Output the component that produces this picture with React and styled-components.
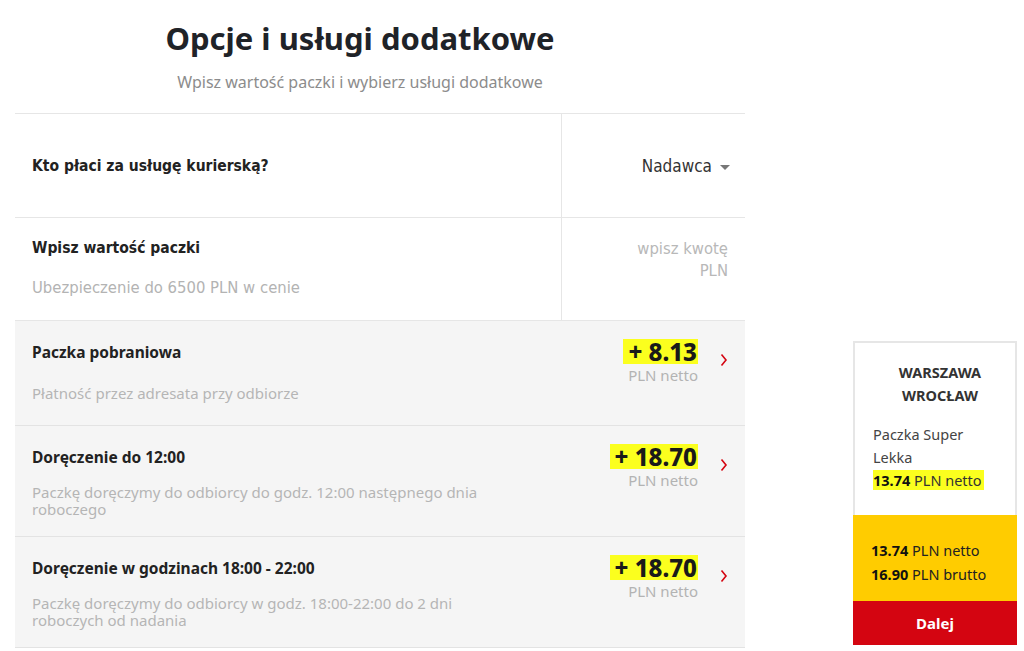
import React from 'react';
import styled, { createGlobalStyle } from 'styled-components';

const GlobalStyle = createGlobalStyle`
  body {
    margin: 0;
    background: #fff;
    font-family: 'Noto Sans', 'Open Sans', sans-serif;
    color: #222;
  }
`;

const services = [
  {
    title: 'Paczka pobraniowa',
    desc: 'Płatność przez adresata przy odbiorze',
    price: '+ 8.13',
  },
  {
    title: 'Doręczenie do 12:00',
    desc: 'Paczkę doręczymy do odbiorcy do godz. 12:00 następnego dnia roboczego',
    price: '+ 18.70',
  },
  {
    title: 'Doręczenie w godzinach 18:00 - 22:00',
    desc: 'Paczkę doręczymy do odbiorcy w godz. 18:00-22:00 do 2 dni roboczych od nadania',
    price: '+ 18.70',
  },
];

const App = () => {
  return (
    <>
      <GlobalStyle />
      <Page>
        <Main>
          <Header>
            <Title>Opcje i usługi dodatkowe</Title>
            <Subtitle>Wpisz wartość paczki i wybierz usługi dodatkowe</Subtitle>
          </Header>
          <List>
            <SplitRow $h={104}>
              <LeftCell>
                <NarrowTitle>Kto płaci za usługę kurierską?</NarrowTitle>
              </LeftCell>
              <RightCell>
                <Select>
                  Nadawca
                  <Caret />
                </Select>
              </RightCell>
            </SplitRow>
            <SplitRow $h={103}>
              <LeftCell $top>
                <NarrowTitle>Wpisz wartość paczki</NarrowTitle>
                <NarrowDesc>Ubezpieczenie do 6500 PLN w cenie</NarrowDesc>
              </LeftCell>
              <RightCell $top>
                <Placeholder>
                  wpisz kwotę
                  <br />
                  PLN
                </Placeholder>
              </RightCell>
            </SplitRow>
            {services.map((s) => (
              <ServiceRow key={s.title}>
                <ServiceText>
                  <ServiceTitle>{s.title}</ServiceTitle>
                  <ServiceDesc>{s.desc}</ServiceDesc>
                </ServiceText>
                <PriceBox>
                  <Price>{s.price}</Price>
                  <PriceUnit>PLN netto</PriceUnit>
                </PriceBox>
                <Chevron viewBox="0 0 8 14">
                  <path d="M1.5 1.5 L6 7 L1.5 12.5" fill="none" stroke="#d40511" strokeWidth="1.6" />
                </Chevron>
              </ServiceRow>
            ))}
          </List>
        </Main>
        <Aside>
          <Card>
            <Route>
              WARSZAWA
              <br />
              WROCŁAW
            </Route>
            <Product>Paczka Super Lekka</Product>
            <Mark>
              <b>13.74</b> PLN netto
            </Mark>
          </Card>
          <Totals>
            <TotalLine>
              <b>13.74</b> PLN netto
            </TotalLine>
            <TotalLine>
              <b>16.90</b> PLN brutto
            </TotalLine>
          </Totals>
          <NextButton>Dalej</NextButton>
        </Aside>
      </Page>
    </>
  );
};

export default App;

const Page = styled.div`
  display: flex;
  align-items: flex-start;
  padding-left: 15px;
  width: 1024px;
  box-sizing: border-box;
`;

const Main = styled.div`
  width: 730px;
  flex-shrink: 0;
`;

const Header = styled.div`
  display: flex;
  flex-direction: column;
  align-items: center;
  padding: 18px 40px 0 0;
  height: 113px;
  box-sizing: border-box;
`;

const Title = styled.h1`
  margin: 0;
  font-size: 31px;
  font-weight: 700;
  line-height: 40px;
  color: #1f2328;
`;

const Subtitle = styled.div`
  margin-top: 13px;
  font-size: 16px;
  color: #8c8c8c;
  line-height: 22px;
`;

const List = styled.div`
  border-top: 1px solid #e6e6e6;
`;

const SplitRow = styled.div`
  display: flex;
  height: ${(p) => p.$h}px;
  box-sizing: border-box;
  border-bottom: 1px solid #e6e6e6;
  background: #fff;
`;

const LeftCell = styled.div`
  flex: 1;
  display: flex;
  flex-direction: column;
  justify-content: ${(p) => (p.$top ? 'flex-start' : 'center')};
  padding: ${(p) => (p.$top ? '19px 17px 0' : '0 17px')};
  border-right: 1px solid #e6e6e6;
`;

const RightCell = styled.div`
  width: 183px;
  display: flex;
  flex-direction: column;
  align-items: flex-end;
  justify-content: ${(p) => (p.$top ? 'flex-start' : 'center')};
  padding: ${(p) => (p.$top ? '20px 17px 0' : '0 15px')};
  box-sizing: border-box;
`;

const NarrowTitle = styled.div`
  font-family: 'DejaVu Sans Condensed', 'Liberation Sans Narrow', sans-serif;
  font-stretch: condensed;
  font-weight: 700;
  font-size: 15.5px;
  line-height: 22px;
  color: #222;
`;

const NarrowDesc = styled.div`
  margin-top: 18px;
  font-family: 'DejaVu Sans Condensed', 'Liberation Sans Narrow', sans-serif;
  font-stretch: condensed;
  font-size: 16.5px;
  line-height: 22px;
  color: #b3b3b3;
`;

const Select = styled.div`
  display: flex;
  align-items: center;
  gap: 8px;
  font-family: 'DejaVu Sans Condensed', 'Liberation Sans Narrow', sans-serif;
  font-stretch: condensed;
  font-size: 17px;
  color: #333;
`;

const Caret = styled.span`
  width: 0;
  height: 0;
  margin-top: 3px;
  border-left: 5px solid transparent;
  border-right: 5px solid transparent;
  border-top: 5px solid #777;
`;

const Placeholder = styled.div`
  text-align: right;
  font-family: 'DejaVu Sans Condensed', 'Liberation Sans Narrow', sans-serif;
  font-stretch: condensed;
  font-size: 16.5px;
  line-height: 22px;
  color: #b8b8b8;
`;

const ServiceRow = styled.div`
  display: flex;
  align-items: flex-start;
  background: #f5f5f5;
  border-bottom: 1px solid #e3e3e3;
  padding: 20px 17px 18px;
  box-sizing: border-box;
`;

const ServiceText = styled.div`
  flex: 1;
  padding-right: 40px;
`;

const ServiceTitle = styled.div`
  font-weight: 700;
  font-size: 15.5px;
  line-height: 22px;
  color: #222;
`;

const ServiceDesc = styled.div`
  display: flex;
  align-items: center;
  min-height: 28px;
  margin-top: 16px;
  font-size: 15px;
  line-height: 17px;
  color: #b5b5b5;
  max-width: 470px;
`;

const PriceBox = styled.div`
  display: flex;
  flex-direction: column;
  align-items: flex-end;
  margin-top: -2px;
`;

const Price = styled.div`
  font-weight: 800;
  font-size: 24px;
  line-height: 25px;
  color: #1a1a1a;
  background: #fbff1e;
  padding: 0 1px 0 5px;
`;

const PriceUnit = styled.div`
  margin-top: 2px;
  font-size: 15px;
  line-height: 18px;
  color: #b3b3b3;
`;

const Chevron = styled.svg`
  width: 8px;
  height: 14px;
  margin: 12px 0 0 22px;
`;

const Aside = styled.div`
  width: 164px;
  margin: 341px 0 0 108px;
  display: flex;
  flex-direction: column;
`;

const Card = styled.div`
  border: 2px solid #e6e6e6;
  border-bottom: none;
  background: #fff;
  padding: 18px 18px 22px;
  height: 174px;
  box-sizing: border-box;
`;

const Route = styled.div`
  text-align: center;
  padding-left: 10px;
  font-weight: 700;
  font-size: 14.5px;
  line-height: 23px;
  color: #333;
`;

const Product = styled.div`
  margin-top: 16px;
  font-size: 14.5px;
  line-height: 23px;
  color: #444;
  padding-right: 30px;
`;

const Mark = styled.span`
  font-size: 14.5px;
  line-height: 23px;
  background: #fbff1e;
  color: #333;
  padding-right: 2px;

  b {
    color: #111;
  }
`;

const Totals = styled.div`
  background: #ffcc00;
  height: 86px;
  padding: 23px 18px 0;
  box-sizing: border-box;
`;

const TotalLine = styled.div`
  font-size: 14.5px;
  line-height: 24px;
  color: #222;

  b {
    color: #111;
  }
`;

const NextButton = styled.button`
  height: 44px;
  border: none;
  background: #d40511;
  color: #fff;
  font-family: 'Noto Sans', sans-serif;
  font-weight: 700;
  font-size: 15px;
  cursor: pointer;
`;
